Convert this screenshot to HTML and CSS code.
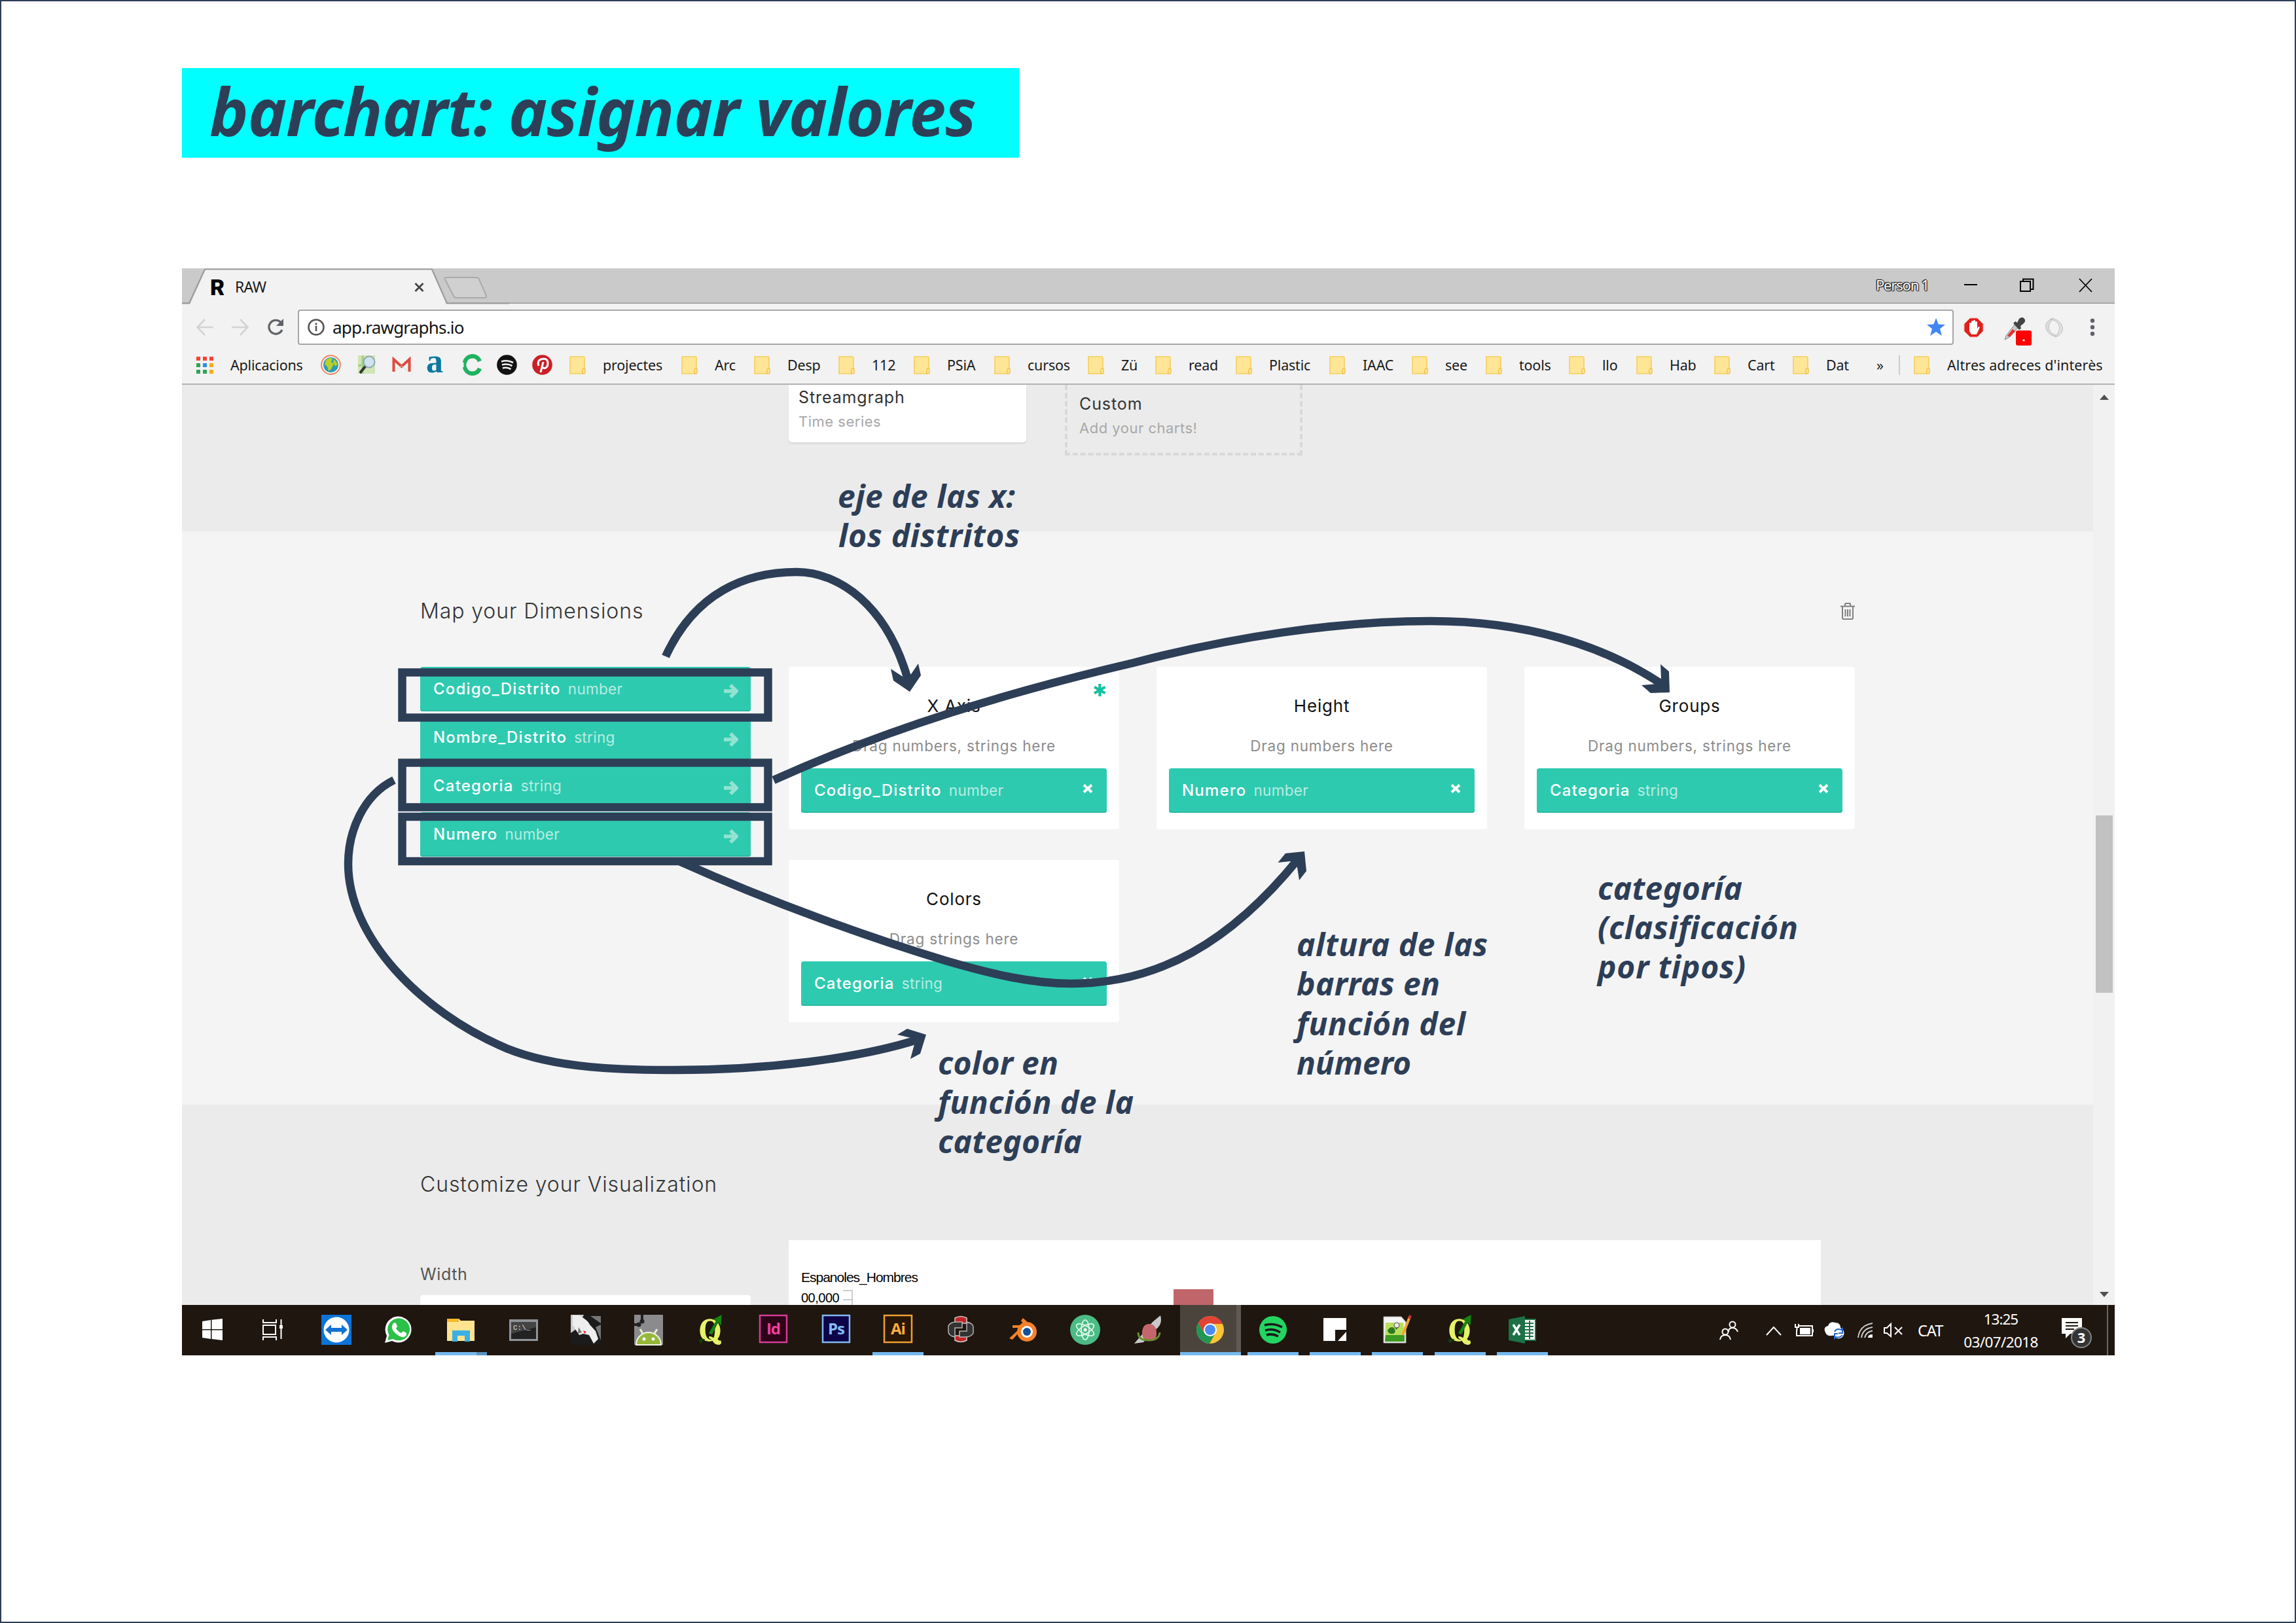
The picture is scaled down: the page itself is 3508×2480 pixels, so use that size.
FILE: index.html
```html
<!DOCTYPE html>
<html lang="es">
<head>
<meta charset="utf-8">
<title>barchart: asignar valores</title>
<link rel="stylesheet" href="styles.css">
</head>
<body>
<svg class="defs" aria-hidden="true">
  <symbol id="folder" viewBox="0 0 25 28"><path d="M1 1h20q2 0 2 2v17h-2v7H1z" fill="#ffe596" stroke="#f6cf5c" stroke-width="1.6"/><path d="M20 27q-1-8 2-8t2 3v3q0 2-2 2z" fill="#ffe596" stroke="#f0c44c" stroke-width="1.4"/></symbol>
  <symbol id="qgis" viewBox="0 0 40 46"><path d="M18 7C9 7 4 15 4 24s5 16 13 16c2 0 4-.4 5.500-1 2 4 5 6 9 6 2 0 3.500-1 4-3l-1-4c-1 1.500-3 1-4.500-1.500C33 33 34 28 34 24 34 14 27 7 18 7zm1 3c6 0 7 6 7 13 0 5-.5 9-2 12-2-2-5-3-7-2l1 3c1 0 2 .5 3 1.500C15 38 12 32 12 24c0-8 1-14 7-14z" fill="#e6f26a"/><path d="M17 28 28 9l-5-1 13-7-1 16-4-5-9 18z" fill="#16820f"/><path d="m2 38 5-2 5 1-3 2-4 4z" fill="#123d0c"/></symbol>
  <symbol id="arrow" viewBox="0 0 24 24"><path d="M2 12h18M12 3l9 9-9 9" fill="none" stroke="#93e3d2" stroke-width="5.500"/></symbol>
  <symbol id="cross" viewBox="0 0 16 14"><path d="M2 1.500 14 12.500M14 1.500 2 12.500" stroke="#fff" stroke-width="4"/></symbol>
</svg>

<main class="slide">
  <h1 class="slide-title"><span>barchart: asignar valores</span></h1>

  <div class="window">
    <header class="tabstrip">
      <div class="tab">
        <svg class="tab-shape" viewBox="0 0 480 54"><path d="M-6 53.500H11L35 1.500H382L405 53.500H500" fill="none" stroke="#999" stroke-width="2"/><path d="M12 55 36 2.500H381L404 55z" fill="#f2f2f2"/><path d="M404 14h46q3 0 4 3l11 25q1 3-3 3h-42q-4 0-5-3l-13-25q-1-3 2-3z" fill="#d0d0d0" stroke="#aaa" stroke-width="2"/></svg>
        <span class="favicon">R</span>
        <span class="tab-name">RAW</span>
        <svg class="tab-close" viewBox="0 0 15 14"><path d="M1.500 1 13.500 13M13.500 1 1.500 13" stroke="#444" stroke-width="2.800"/></svg>
      </div>
      <div class="controls">
        <span class="person">Person 1</span>
        <svg viewBox="0 0 20 22"><path d="M0 10h20" stroke="#000" stroke-width="2"/></svg>
        <svg viewBox="0 0 22 22"><path d="M1 5h15v15H1zM5 5V1.500h15.500V17H16" fill="none" stroke="#000" stroke-width="2"/></svg>
        <svg viewBox="0 0 21 22"><path d="M1 1l19 20M20 1 1 21" stroke="#000" stroke-width="1.800"/></svg>
      </div>
    </header>

    <div class="toolbar">
      <svg class="nav" viewBox="0 0 26 26"><path d="M26 13H2M13 1 1.500 13 13 25" fill="none" stroke="#d2d3d5" stroke-width="2.600"/></svg>
      <svg class="nav" viewBox="0 0 26 26"><path d="M0 13h24M13 1l11.500 12L13 25" fill="none" stroke="#d2d3d5" stroke-width="2.600"/></svg>
      <svg class="nav" viewBox="0 0 26 26"><path d="M21 5.500A10.500 10.500 0 1 0 23 17" fill="none" stroke="#5f6368" stroke-width="3.200"/><path d="M25 0v11H14z" fill="#5f6368"/></svg>
      <div class="omnibox">
        <svg class="info" viewBox="0 0 26 26"><circle cx="13" cy="13" r="11.500" fill="none" stroke="#555" stroke-width="2.600"/><path d="M13 11v8M13 6.500v3" stroke="#555" stroke-width="2.600"/></svg>
        <span class="url">app.rawgraphs.io</span>
        <svg class="star" viewBox="0 0 28 28"><path d="m14 0 3.600 9.500 10.400.5-8 6.500 3 10.500-9-6-9 6 3-10.500-8-6.500 10.400-.5z" fill="#4285f4"/></svg>
      </div>
      <svg class="ext" viewBox="0 0 31 31"><path d="M10 1h11l9 9v11l-9 9H10l-9-9V10z" fill="#e0201c" stroke="#f6b0ae"/><path d="M9 21V9q1.500-2 3 0V6q1.500-2 3 0V5q1.500-2 3 0v2q1.500-2 3 0v10l2-3q2 0 1.500 2L20 26h-8z" fill="#fff"/></svg>
      <svg class="ext picker" viewBox="0 0 42 43"><path d="m3 28 13-17 5 5L7 31l-6 3z" fill="#c8c8c8" stroke="#888"/><path d="m5 28 8-10 4 3-8 9z" fill="#d33"/><path d="m14 9 3-3 3 2 3-6q5-4 8 0t-2 8l-4 3 1 4-3 2z" fill="#444"/><rect x="18" y="20" width="24" height="23" rx="3" fill="#f00"/><path d="M28.500 35h3" stroke="#fff" stroke-width="2.500"/></svg>
      <svg class="ext" viewBox="0 0 31 31"><path d="M14 1C3 5 0 13 5 21s14 9 17 7C9 26 6 18 8 11s7-8 6-10z" fill="#dcdcdc" stroke="#bdbdbd"/><path d="M17 30c11-4 14-12 9-20S12 1 9 3c13 2 16 10 14 17s-7 8-6 10z" fill="#e2e2e2" stroke="#bdbdbd"/></svg>
      <svg class="more" viewBox="0 0 8 28"><circle cx="4" cy="4" r="3.200"/><circle cx="4" cy="14" r="3.200"/><circle cx="4" cy="24" r="3.200"/></svg>
    </div>

    <nav class="bookmarks">
      <a class="apps"><svg viewBox="0 0 26 26"><path d="M0 0h6v6H0zM10 0h6v6h-6zM20 0h6v6h-6z" fill="#f44336"/><path d="M0 10h6v6H0z" fill="#2ea35a"/><path d="M10 10h6v6h-6z" fill="#2f8cf0"/><path d="M20 10h6v6h-6z" fill="#f9ab12"/><path d="M0 20h6v6H0zM10 20h6v6h-6z" fill="#2ea35a"/><path d="M20 20h6v6h-6z" fill="#f9ab12"/></svg>Aplicacions</a>
      <a><svg class="site" viewBox="0 0 31 31"><circle cx="15.500" cy="15.500" r="14.300" fill="#fff" stroke="#f2805f" stroke-width="2"/><circle cx="15.500" cy="15.500" r="11.500" fill="#2b9cb5"/><path d="M8 8q6-5 10-2l-2 5 4 3-4 8-4 3-2-7-4-3zM20 6l6 8-3 4-4-5z" fill="#b9cf2a"/></svg></a>
      <a><svg class="site" viewBox="0 0 31 31"><path d="M2 1h26v28H2z" fill="#cfe5b5"/><path d="M9 1v28M2 17l26-5" stroke="#a4cf86" stroke-width="3"/><circle cx="19" cy="11" r="8.500" fill="#cfe3ef" stroke="#8fa6b3" stroke-width="2"/><path d="m13 18-8 10" stroke="#333" stroke-width="4"/></svg></a>
      <a><svg class="site" viewBox="0 0 31 31"><path d="M2 6h27v20H2z" fill="#f3f3f3"/><path d="M3.500 26V7l12 11 12-11v19" fill="none" stroke="#dd4b3e" stroke-width="4"/><path d="m5 26 10.500-9L26 26" fill="none" stroke="#d5d5d5"/></svg></a>
      <a class="letter-a">a</a>
      <a><svg class="site" viewBox="0 0 31 31"><path d="M27 10A12 12 0 0 0 4 12M4 19a12 12 0 0 0 23 2" fill="none" stroke="#1fb25f" stroke-width="6.500"/><path d="M4.500 11v9" stroke="#1fb25f" stroke-width="4"/></svg></a>
      <a><svg class="site" viewBox="0 0 31 31"><circle cx="15.500" cy="15.500" r="15.300" fill="#111"/><path d="M7 10.500q9-3 18 1.500M8 15.500q8-2.500 15.500 1.500M9 20.500q6-2 12.500 1.500" fill="none" stroke="#f1f1f1" stroke-width="2.600"/></svg></a>
      <a><svg class="site" viewBox="0 0 31 31"><circle cx="15.500" cy="15.500" r="15.300" fill="#cb1f27"/><path d="M10 17q-3-9 5.500-10.500T24 13q0 7-5 7.500-3 0-3-2M17 11l-4 16" fill="none" stroke="#fff" stroke-width="3"/></svg></a>
      <a><svg class="dir"><use href="#folder"/></svg>projectes</a>
      <a><svg class="dir"><use href="#folder"/></svg>Arc</a>
      <a><svg class="dir"><use href="#folder"/></svg>Desp</a>
      <a><svg class="dir"><use href="#folder"/></svg>112</a>
      <a><svg class="dir"><use href="#folder"/></svg>PSiA</a>
      <a><svg class="dir"><use href="#folder"/></svg>cursos</a>
      <a><svg class="dir"><use href="#folder"/></svg>Zü</a>
      <a><svg class="dir"><use href="#folder"/></svg>read</a>
      <a><svg class="dir"><use href="#folder"/></svg>Plastic</a>
      <a><svg class="dir"><use href="#folder"/></svg>IAAC</a>
      <a><svg class="dir"><use href="#folder"/></svg>see</a>
      <a><svg class="dir"><use href="#folder"/></svg>tools</a>
      <a><svg class="dir"><use href="#folder"/></svg>llo</a>
      <a><svg class="dir"><use href="#folder"/></svg>Hab</a>
      <a><svg class="dir"><use href="#folder"/></svg>Cart</a>
      <a><svg class="dir"><use href="#folder"/></svg>Dat</a>
      <a class="overflow">»</a>
      <a class="others"><svg class="dir"><use href="#folder"/></svg>Altres adreces d'interès</a>
    </nav>

    <div class="viewport">
      <div class="page">
        <section class="charts">
          <div class="chart-card"><h3>Streamgraph</h3><p>Time series</p></div>
          <div class="chart-card custom"><h3>Custom</h3><p>Add your charts!</p></div>
        </section>

        <section class="mapping">
          <div class="heading"><h2>Map your Dimensions</h2>
            <svg class="trash" viewBox="0 0 24 26"><path d="M1 5.500h22M4 6v17q0 2 2 2h12q2 0 2-2V6M8 5V2q0-1 1-1h6q1 0 1 1v3M8.500 10v11M12 10v11M15.500 10v11" fill="none" stroke="#808080" stroke-width="2"/></svg>
          </div>
          <div class="columns">
            <ul class="dimensions">
              <li><b>Codigo_Distrito</b><i>number</i><svg class="go"><use href="#arrow"/></svg></li>
              <li><b>Nombre_Distrito</b><i>string</i><svg class="go"><use href="#arrow"/></svg></li>
              <li><b>Categoria</b><i>string</i><svg class="go"><use href="#arrow"/></svg></li>
              <li><b>Numero</b><i>number</i><svg class="go"><use href="#arrow"/></svg></li>
            </ul>
            <div class="zones">
              <div class="zone"><span class="required">✱</span><h4>X Axis</h4><p>Drag numbers, strings here</p><div class="chip"><b>Codigo_Distrito</b><i>number</i><svg class="remove"><use href="#cross"/></svg></div></div>
              <div class="zone"><h4>Height</h4><p>Drag numbers here</p><div class="chip"><b>Numero</b><i>number</i><svg class="remove"><use href="#cross"/></svg></div></div>
              <div class="zone"><h4>Groups</h4><p>Drag numbers, strings here</p><div class="chip"><b>Categoria</b><i>string</i><svg class="remove"><use href="#cross"/></svg></div></div>
              <div class="zone"><h4>Colors</h4><p>Drag strings here</p><div class="chip"><b>Categoria</b><i>string</i><svg class="remove"><use href="#cross"/></svg></div></div>
            </div>
          </div>
        </section>

        <section class="customize">
          <div class="heading"><h2>Customize your Visualization</h2></div>
          <div class="columns">
            <div class="options"><label>Width</label><div class="input"></div></div>
            <div class="preview">
              <p>Espanoles_Hombres</p>
              <div class="axis"><span>00,000</span><svg viewBox="0 0 600 26"><path d="M4 3h14v23M4 17h14" fill="none" stroke="#ccc" stroke-width="2"/><path d="M509 1h61v25h-61z" fill="#c0666a"/></svg></div>
            </div>
          </div>
        </section>
      </div>
      <div class="scrollbar">
        <svg viewBox="0 0 14 8"><path d="M0 8 7 0l7 8z" fill="#505050"/></svg>
        <div class="thumb"></div>
        <svg viewBox="0 0 14 8"><path d="M0 0h14L7 8z" fill="#505050"/></svg>
      </div>
    </div>

    <footer class="taskbar">
      <div class="launcher">
        <span><svg viewBox="0 0 46 48"><path d="m7 11 13-2v14H7zM21.500 8.800 38 7v16H21.500zM7 24.500h13v13.500L7 36zM21.500 24.500H38V40l-16.500-2z" fill="#fff"/></svg></span>
        <span><svg viewBox="0 0 46 48"><path d="M6 8v5h20V8M6 40v-5h20v5M6 17h19v14H6zM33.500 8v30" fill="none" stroke="#fff" stroke-width="2"/><path d="M31 17h5v5h-5z" fill="#fff"/></svg></span>
        <span><svg viewBox="0 0 46 48"><path d="M0 1h46v46H0z" fill="#0b74d8"/><circle cx="23" cy="24" r="19.500" fill="#fff"/><path d="m6 24 9-8v5h16v-5l9 8-9 8v-5H15v5z" fill="#1272d3"/></svg></span>
        <span><svg viewBox="0 0 46 48"><path d="M2 44 5 33A20 20 0 1 1 13 41z" fill="#fff"/><path d="M6 40l2.500-8A17 17 0 1 1 14.500 38z" fill="#2bc148"/><path d="M15 14q3-3 5 2l1 3-2 3q3 5 8 7l3-3 5 3q1 4-4 6-5 1-12-5T13 19q0-3 2-5z" fill="#fff"/></svg></span>
        <span class="running split"><svg viewBox="0 0 46 48"><path d="M2 7h18l3 3h21v31H2z" fill="#ffe48f"/><path d="M2 7h18v5H2z" fill="#f7b92b"/><path d="M10 42V25h27v17h-8v-9H18v9z" fill="#3cb0e4"/></svg></span>
        <span><svg viewBox="0 0 46 48"><path d="M1 8h44v33H1z" fill="#8f9499"/><path d="M4 12h38v26H4z" fill="#222"/><path d="M4 12h38v8L4 30z" fill="#444"/><text x="7" y="24" class="tiny">C:\_</text></svg></span>
        <span><svg viewBox="0 0 46 48"><path d="M0 1h46v46H0z" fill="#1b1b1b"/><path d="M0 1h20l-9 20L0 29z" fill="#ccc"/><path d="M3 2h10q14 8 16 14l9 10 4 12-7 7-7-13-9-2-6 2L3 17z" fill="#eee"/><path d="M12 20l5 8-6 2zM46 14 30 3h16zM46 40 38 20l8-4z" fill="#777"/><path d="m19 25 5 2-3 3z" fill="#e22"/></svg></span>
        <span><svg viewBox="0 0 46 48"><path d="M1 1h44v46H1z" fill="#8b8b8e"/><path d="M4 47a19 19 0 0 1 38 0z" fill="#97b73a" stroke="#f1f4e6" stroke-width="2"/><path d="m10 23 5 8M36 23l-5 8" stroke="#e5edcc" stroke-width="3"/><circle cx="16" cy="38" r="2.500" fill="#fff"/><circle cx="30" cy="38" r="2.500" fill="#fff"/><path d="M13 1v9M1 16h7" stroke="#222" stroke-width="4"/><circle cx="13" cy="11" r="3.500" fill="#222"/><circle cx="8" cy="16" r="3.500" fill="#222"/></svg></span>
        <span><svg><use href="#qgis"/></svg></span>
        <span><svg viewBox="0 0 46 48"><path d="M3 2h41v41H3z" fill="#2c0417" stroke="#d63a96" stroke-width="2.500"/><text x="23.500" y="31" class="adobe" fill="#f0409f">Id</text></svg></span>
        <span><svg viewBox="0 0 46 48"><path d="M3 2h41v41H3z" fill="#0c0447" stroke="#82b8f2" stroke-width="2.500"/><text x="23.500" y="31" class="adobe" fill="#84bdf7">Ps</text></svg></span>
        <span class="running"><svg viewBox="0 0 46 48"><path d="M2 2h42v41H2z" fill="#291604" stroke="#f0a030" stroke-width="2.500"/><text x="23" y="31" class="adobe" fill="#fdae3c">Ai</text></svg></span>
        <span><svg viewBox="0 0 46 48"><path d="M14 6q9-5 18 0v8H14z" fill="#c42424" stroke="#ccc" stroke-width="1.500"/><path d="M14 33h18v7q-9 5-18 0z" fill="#c42424" stroke="#ccc" stroke-width="1.500"/><path d="M4 18q3-6 12-6h9v9H14v14q-10-2-10-8zM42 29q-3 6-12 6h-9v-9h11V12q10 2 10 8z" fill="#333" stroke="#b5b5b5" stroke-width="1.500"/></svg></span>
        <span><svg viewBox="0 0 46 48"><path d="M2 37 19 21H7v-4h18l-5-7 3-4 18 16-3 4-14-6L7 39z" fill="#f5822a"/><circle cx="29" cy="27" r="15" fill="#f5822a"/><circle cx="29" cy="27" r="9" fill="#fff"/><circle cx="29" cy="27" r="6" fill="#12509a"/></svg></span>
        <span><svg viewBox="0 0 46 48"><circle cx="23" cy="24" r="23" fill="#4cbb85"/><g fill="none" stroke="#e4fff0" stroke-width="1.600"><ellipse cx="23" cy="24" rx="6" ry="15"/><ellipse cx="23" cy="24" rx="6" ry="15" transform="rotate(60 23 24)"/><ellipse cx="23" cy="24" rx="6" ry="15" transform="rotate(120 23 24)"/></g><circle cx="23" cy="24" r="2.500" fill="#fff"/></svg></span>
        <span><svg viewBox="0 0 46 48"><path d="M2 45 30 12 42 2q4 14-8 22L16 43z" fill="#c9c9c9"/><path d="M14 26q2-12 12-11t10 14-9 12q-14 0-13-15z" fill="#c4676b"/><path d="M8 28q0 12 16 12t17-12" fill="none" stroke="#678f2f" stroke-width="3"/></svg></span>
        <span class="running active"><svg viewBox="0 0 46 48"><circle cx="23" cy="24" r="21" fill="#fbc334"/><path d="M4.800 13.500A21 21 0 0 1 41.200 13.500L42 15H23z" fill="#e14334"/><path d="M4.800 13.500A21 21 0 0 0 22 45l9-16H14z" fill="#209755"/><path d="M23 15 14 29 4.800 13.500 13 6z" fill="#e14334"/><circle cx="23" cy="24" r="10" fill="#fff"/><circle cx="23" cy="24" r="8" fill="#4a8bf5"/></svg></span>
        <span class="running"><svg viewBox="0 0 46 48"><circle cx="23" cy="24" r="21" fill="#23d560"/><path d="M10 17q14-4 27 3M11 25q12-4 23 3M13 32q9-3 18 2" fill="none" stroke="#1a1a1a" stroke-width="3.600"/></svg></span>
        <span class="running"><svg viewBox="0 0 46 48"><path d="M5 6h35v18H23v17H5z" fill="#fff"/><path d="M40 27v14H27z" fill="#fff"/></svg></span>
        <span class="running"><svg viewBox="0 0 46 48"><path d="M2 4h27l7 8v32H2z" fill="#f4f4f4" stroke="#aaa"/><path d="M5 13h27l2 29H4z" fill="#b9df5a"/><path d="M5 32h29v10H4z" fill="#3d9a22"/><path d="M8 25q4-7 10-4 4 8-2 9-7 1-8-5zM18 17l8 2-5 5z" fill="#2d7a24"/><circle cx="22" cy="17" r="4" fill="#e8e8e8" stroke="#555"/><path d="m42 4-11 28" stroke="#f0a52c" stroke-width="4"/><path d="m43 2-2 5" stroke="#c33" stroke-width="4"/></svg></span>
        <span class="running"><svg><use href="#qgis"/></svg></span>
        <span class="running"><svg viewBox="0 0 46 48"><path d="M25 8h18v32H25z" fill="#fff" stroke="#1e7145" stroke-width="2"/><path d="M27 14h13M27 19h13M27 24h13M27 29h13M27 34h13M34 10v28" stroke="#1e7145" stroke-width="2"/><path d="M2 8 27 3v42L2 40z" fill="#1e7145"/><path d="m9 16 10 16M19 16 9 32" stroke="#fff" stroke-width="3.500"/></svg></span>
      </div>
      <div class="tray">
        <svg class="people" viewBox="0 0 30 30"><g fill="none" stroke="#fff" stroke-width="2"><circle cx="20" cy="6" r="4.500"/><path d="M14 17q0-6 6-6t8 6"/><circle cx="9" cy="17" r="4.500"/><path d="M1 29q1-7 8-7t8 7"/></g></svg>
        <svg class="chevron" viewBox="0 0 24 16"><path d="M1 15 12 3l11 12" fill="none" stroke="#fff" stroke-width="2"/></svg>
        <svg class="battery" viewBox="0 0 29 22"><path d="M7 4h20v15H3v-9M28 9v5" fill="none" stroke="#fff" stroke-width="2"/><path d="M8 7h16v10H8z" fill="#fff"/><path d="M1 1v5h5V1M3.500 6v5" fill="none" stroke="#fff" stroke-width="2"/></svg>
        <svg class="cloud" viewBox="0 0 31 27"><path d="M2 17q-4-8 4-10 3-8 11-5 8 0 8 8l2 9-15 3q-8 1-10-5z" fill="#fff"/><circle cx="22" cy="18" r="8.500" fill="#fff"/><path d="M16 16q3-6 10-3l2-2v7h-6M28 21q-4 5-10 3l-2 2v-7h5" fill="none" stroke="#2169c8" stroke-width="2"/></svg>
        <svg class="wifi" viewBox="0 0 24 24"><g fill="none" stroke="#ccc" stroke-width="2"><path d="M1 23Q3 4 23 1M6 23Q8 9 23 7M11 23Q13 14 23 12.500"/></g><path d="M16 23q0-5 7-5v5z" fill="#fff"/></svg>
        <svg class="volume" viewBox="0 0 30 22"><path d="M1 7h4l6-6v19l-6-5H1zM17 6l11 11M28 6 17 17" fill="none" stroke="#fff" stroke-width="2"/></svg>
        <span class="lang">CAT</span>
        <div class="clock"><span>13:25</span><span class="date">03/07/2018</span></div>
        <svg class="notice" viewBox="0 0 46 48"><path d="M1 1h31v24H14l-7 7v-7H1z" fill="#fff"/><path d="M7 8h19M7 13h19M7 18h13" stroke="#1e160f" stroke-width="2"/><circle cx="31" cy="31" r="15" fill="#343434" stroke="#858585" stroke-width="2"/><text x="31" y="39" class="count">3</text></svg>
        <div class="peek"></div>
      </div>
    </footer>
  </div>

  <svg class="notes" viewBox="0 0 3508 2480">
    <g class="frame">
      <rect x="614.500" y="1027.500" width="559" height="69"/>
      <rect x="614.500" y="1165.500" width="559" height="68"/>
      <rect x="614.500" y="1248" width="559" height="68"/>
    </g>
    <g class="stroke">
      <path d="M1017 1003C1062 905 1140 874 1217 874C1282 874 1355 925 1387 1038"/>
      <path d="M1182 1192C1360 1112 1540 1058 1731 1013C1880 974 2040 949 2186 949C2330 949 2450 985 2543 1048"/>
      <path d="M602 1192C555 1215 532 1270 532 1320C532 1430 640 1545 774 1602C850 1633 950 1635 1031 1635C1170 1635 1310 1618 1404 1588"/>
      <path d="M1038 1316C1180 1380 1330 1433 1445 1468C1520 1490 1580 1503 1636 1503C1770 1503 1880 1440 1984 1312"/>
    </g>
    <g class="head">
      <path d="M1390 1057l-25-17-4-18 20 13 11-5 11-16 4 18z"/>
      <path d="M2551 1058l-1-32-13-11 1 22-7 8-23 2 14 12z"/>
      <path d="M1415 1581l-29-9-15 9 21 5 5 10-6 22 15-8z"/>
      <path d="M1993 1301l-29 3-11.500 14 19.500-2 10 9 3 20 11-14z"/>
    </g>
    <g class="words">
      <text x="1280" y="776" textLength="271">eje de las x:</text>
      <text x="1281" y="836" textLength="277">los distritos</text>
      <text x="2441" y="1375" textLength="221">categoría</text>
      <text x="2441" y="1435" textLength="306">(clasificación</text>
      <text x="2441" y="1495" textLength="226">por tipos)</text>
      <text x="1981" y="1461" textLength="292">altura de las</text>
      <text x="1981" y="1521" textLength="219">barras en</text>
      <text x="1981" y="1581.500" textLength="258">función del</text>
      <text x="1981" y="1642" textLength="175">número</text>
      <text x="1433" y="1642" textLength="184">color en</text>
      <text x="1433" y="1702" textLength="299">función de la</text>
      <text x="1433" y="1762" textLength="220">categoría</text>
    </g>
  </svg>
</main>
</body>
</html>
```
FILE: styles.css
```css
* { box-sizing: border-box; margin: 0; padding: 0; }
body { width: 3508px; height: 2480px; background: #fff; overflow: hidden; }
.defs { position: absolute; width: 0; height: 0; }
svg { display: block; flex: none; overflow: visible; }
h1, h2, h3, h4, b, i { font-weight: 400; font-style: normal; }
a, span, b, i, p, h2 { white-space: nowrap; }

.slide { position: relative; width: 3508px; height: 2480px; padding: 102px 0 0 276px; border: 2px solid #2d3d57; color: #2d3e57; }
.slide-title { width: 1279px; height: 137px; padding-left: 42px; background: #0ff; font: italic 700 100px/131px "Noto Sans", sans-serif; letter-spacing: -.8px; white-space: nowrap; }
.window { width: 2953px; height: 1661px; margin-top: 169px; display: grid; grid-template-rows: 54px 70px 54px 1406px 77px; font-family: "Noto Sans", sans-serif; color: #1a1a1a; background: #f2f2f2; overflow: hidden; }

/* browser chrome */
.tabstrip { display: flex; justify-content: space-between; background: #cacaca; box-shadow: inset 0 -1.500px #999; }
.tab { position: relative; width: 480px; display: flex; align-items: center; padding-left: 43px; }
.tab-shape { position: absolute; left: 0; top: 0; width: 480px; height: 54px; }
.favicon { position: relative; width: 38px; font: 900 34px/54px "Roboto", sans-serif; color: #000; padding-top: 4px; }
.tab-name { position: relative; width: 274px; padding-top: 2px; font-size: 23px; letter-spacing: -.7px; }
.tab-close { position: relative; width: 15px; height: 14px; margin-top: 4px; }
.controls { display: flex; align-items: flex-start; padding: 15px 34px 0 0; }
.controls svg { height: 22px; }
.controls svg:nth-of-type(1) { width: 20px; margin-right: 65px; }
.controls svg:nth-of-type(2) { width: 22px; margin-right: 68px; }
.controls svg:nth-of-type(3) { width: 21px; }
.person { width: 135px; font-size: 22px; line-height: 20px; letter-spacing: -1.200px; color: #fff; text-shadow: 1px 0 1px #222, -1px 0 1px #222, 0 1px 1px #222, 0 -1px 1px #222, 1px 1px 1px #222, -1px -1px 1px #222; }
.toolbar { display: flex; align-items: center; padding: 2px 30px 0 22px; }
.nav { width: 26px; height: 26px; margin-right: 28px; }
.nav:nth-child(3) { margin-right: 21px; }
.omnibox { width: 2530px; height: 54px; display: flex; align-items: center; padding: 0 11px 0 13px; margin-right: 15px; background: #fff; border: 2px solid #a6a6a6; border-radius: 4px; }
.info { width: 26px; height: 26px; }
.url { flex: 1; padding: 0 0 1px 12px; font-size: 26px; letter-spacing: -.8px; color: #111; }
.star { width: 28px; height: 28px; }
.ext { width: 31px; height: 31px; margin-right: 31px; }
.picker { width: 42px; height: 43px; margin: 12px 19px 0 0; }
.more { width: 8px; height: 28px; margin-left: 8px; fill: #5f6368; }
.bookmarks { display: grid; border-bottom: 2px solid #b3b3b3; padding: 0 0 5px 22px; font-size: 21.500px; letter-spacing: -.2px; align-items: center;
  grid-template-columns: 190px 55px 53px 53px 55px 53px 54px 57px 171px 111px 129px 115px 123px 143px 103px 123px 143px 126px 113px 127px 103px 119px 120px 128px 34px 1fr; }
.bookmarks a { display: flex; align-items: center; line-height: 30px; }
.apps svg { width: 26px; height: 26px; margin-right: 26px; }
.site { width: 31px; height: 31px; }
.dir { width: 25px; height: 28px; margin-right: 26px; }
.letter-a { font: 700 52px/30px "Liberation Serif", serif !important; color: #0b79a1; padding-bottom: 12px; }
.bookmarks .others { padding-left: 21px; border-left: 2px solid #ccc; letter-spacing: .1px; }

/* page */
.viewport { display: grid; grid-template-columns: 2920px 33px; height: 1406px; overflow: hidden; }
.page { font-family: "Inter", sans-serif; color: #333; }
section { padding-left: 364px; }
.charts { height: 224px; padding-left: 927px; display: flex; gap: 59px; align-items: flex-start; background: #ebebeb; }
.chart-card { width: 363px; height: 88px; padding: 1px 16px 0 15px; background: #fff; border-radius: 0 0 5px 5px; box-shadow: 0 2px 2px #d5d5d5; }
.chart-card h3 { font-size: 25px; line-height: 36px; letter-spacing: .9px; }
.chart-card p { font-size: 22px; line-height: 36px; letter-spacing: .5px; color: #a8a8a8; padding-top: 1px; }
.custom { height: 108px; padding: 11px 18px; background: none; border: 4px dashed #d8d8d8; border-top: 0; box-shadow: none; border-radius: 0; }
.mapping { height: 876px; background: #f4f4f4; }
.customize { height: 306px; background: #ebebeb; overflow: hidden; }
.heading { width: 2193px; height: 207px; padding-top: 92px; display: flex; justify-content: space-between; }
h2 { font-size: 32px; line-height: 60px; font-weight: 300; letter-spacing: .9px; }
.trash { width: 24px; height: 26px; margin-top: 17px; }
.columns { display: flex; gap: 58px; }
.dimensions { width: 505px; display: grid; gap: 6px; align-content: start; list-style: none; }
.dimensions li, .chip { display: flex; height: 68px; padding-left: 20px; line-height: 68px; font-size: 24px; color: #fff; background: #2ecab0; box-shadow: inset 0 -2px #29b9a1; border-radius: 4px; }
.dimensions b, .chip b { font-weight: 500; letter-spacing: 1.200px; }
.dimensions i, .chip i { margin-left: 11px; font-size: 22.500px; letter-spacing: .3px; color: #b8ede2; }
.go { width: 24px; height: 24px; margin: 25px 19px 0 auto; }
.zones { width: 1629px; display: grid; grid-template-columns: repeat(3, 505px); gap: 47px 57px; }
.zone { position: relative; height: 248px; padding: 30px 19px 0; text-align: center; background: #fff; border-radius: 4px; }
.zone h4 { font-size: 26px; line-height: 60px; letter-spacing: .8px; color: #111; }
.zone p { font-size: 22.500px; line-height: 62px; letter-spacing: .8px; color: #8c8c8c; margin-bottom: 3px; }
.required { position: absolute; right: 19px; top: 22px; font: 26px/28px "DejaVu Sans", sans-serif; color: #10c2a2; }
.remove { width: 16px; height: 14px; margin: 24px 21px 0 auto; }
.options { width: 505px; padding-top: 18px; }
.options label { display: block; font-size: 25px; line-height: 68px; height: 66px; letter-spacing: .6px; color: #555; }
.input { height: 40px; background: #fff; border-radius: 4px; }
.preview { width: 1577px; height: 120px; padding: 36px 0 0 19px; background: #fff; font: 21px/42px "Liberation Sans", sans-serif; color: #000; }
.preview p { letter-spacing: -1px; height: 40px; }
.axis { display: flex; height: 26px; line-height: 24px; margin-top: -2px; font-size: 20px; }
.axis span { width: 60px; padding-top: 2px; letter-spacing: -.5px; }
.axis svg { width: 600px; height: 26px; }
.scrollbar { display: flex; flex-direction: column; align-items: center; background: #f1f1f1; padding: 15px 0 12px; }
.scrollbar svg { width: 14px; height: 8px; }
.thumb { width: 26px; height: 271px; margin: 635px 0 auto; background: #c1c1c1; }

/* taskbar */
.taskbar { display: flex; justify-content: space-between; background: #1e160f; color: #fff; }
.launcher { display: grid; grid-template-columns: 93px 95px repeat(20, 95.400px); }
.launcher span { display: flex; justify-content: center; padding-top: 14px; }
.launcher svg { width: 46px; height: 48px; }
.running { background: linear-gradient(#76b9ed, #76b9ed) center bottom / 78px 5px no-repeat; }
.split { background: linear-gradient(90deg, #76b9ed 80%, #5b93c0 80%) center bottom / 79px 5px no-repeat; }
.active { background: linear-gradient(#76b9ed, #76b9ed) center bottom / 93px 5px no-repeat, linear-gradient(90deg, #4b443d 92%, #5f5953 92%) center / 93px 77px no-repeat; }
.tiny { font: 11px "Liberation Mono", monospace; fill: #ddd; }
.adobe { font: 700 24px "Open Sans", sans-serif; text-anchor: middle; letter-spacing: -1px; }
.tray { width: 604px; display: flex; align-items: center; }
.people { width: 30px; height: 30px; margin-right: 41px; }
.chevron { width: 24px; height: 16px; margin-right: 20px; }
.battery { width: 29px; height: 22px; margin-right: 16px; }
.cloud { width: 31px; height: 27px; margin-right: 20px; }
.wifi { width: 24px; height: 24px; margin-right: 16px; }
.volume { width: 30px; height: 22px; margin-right: 22px; }
.lang { width: 57px; font-size: 23.500px; letter-spacing: -1px; }
.clock { width: 140px; display: grid; justify-items: center; font-size: 22.500px; line-height: 35px; letter-spacing: -1px; }
.date { letter-spacing: -.6px; }
.notice { width: 46px; height: 48px; margin: 8px 0 0 22px; }
.count { font: 700 22px "Open Sans", sans-serif; fill: #fff; text-anchor: middle; }
.peek { width: 2px; height: 77px; background: #666; margin-left: 24px; }

/* annotations over the screenshot */
.notes { position: absolute; left: -2px; top: -2px; width: 3508px; height: 2480px; }
.frame rect, .stroke path { fill: none; stroke: #2d3e57; stroke-width: 12.500px; }
.head path, .words { fill: #2d3e57; }
.words text { font: italic 700 48px "Noto Sans", sans-serif; }
```
